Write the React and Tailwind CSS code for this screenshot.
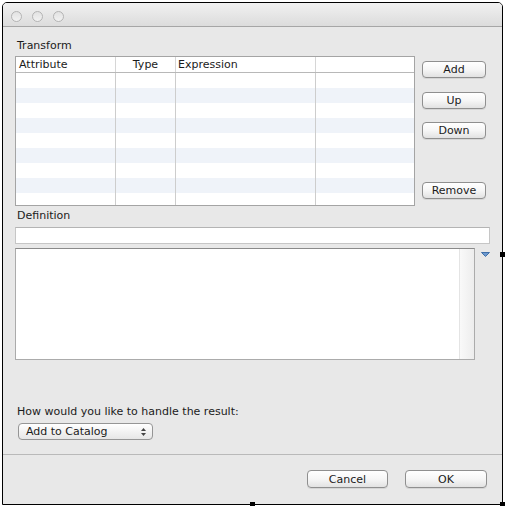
import React from "react";

const rows = [0, 1, 2, 3, 4, 5, 6, 7, 8];

function AquaButton({ children, className = "" }) {
  return (
    <button
      className={
        "flex items-center justify-center rounded-[4px] border border-[#8f8f8f] bg-linear-to-b from-white via-[#f6f6f6] to-[#e2e2e2] text-[11px] leading-none text-[#1b1b1b] shadow-[0_1px_0_rgba(0,0,0,0.08)] " +
        className
      }
    >
      {children}
    </button>
  );
}

function Light() {
  return (
    <div className="h-[11px] w-[11px] rounded-full border border-[#b4b4b4] bg-linear-to-b from-[#e2e2e2] to-[#f2f2f2]" />
  );
}

export default function App() {
  return (
    <div className="relative h-[513px] w-[511px] bg-white font-['DejaVu_Sans',sans-serif] text-[#1b1b1b]">
      <div className="ml-[2px] flex h-[503px] w-[501px] flex-col translate-y-[2px] rounded-t-[5px] border border-black bg-[#e8e8e8]">
        {/* title bar */}
        <div className="flex h-[24px] shrink-0 items-start gap-[10px] rounded-t-[4px] border-b border-[#a6a6a6] bg-linear-to-b from-[#f1f1f1] to-[#dcdcdc] pl-[8px] pt-[8px]">
          <Light />
          <Light />
          <Light />
        </div>

        {/* body */}
        <div className="flex flex-col px-[12px] pt-[12px]">
          <div className="pl-[2px] text-[11px] leading-[14px]">Transform</div>

          <div className="mt-[3px] flex">
            <div className="h-[150px] w-[400px] overflow-hidden border border-[#a4a4a4] bg-white">
              <div className="flex h-[16px] border-b border-[#b8b8b8] text-[11px] leading-[15px]">
                <div className="w-[100px] border-r border-[#d6d6d6] pl-[3px]">Attribute</div>
                <div className="w-[60px] border-r border-[#d6d6d6] text-center">Type</div>
                <div className="w-[140px] border-r border-[#d6d6d6] pl-[2px]">Expression</div>
                <div className="flex-1" />
              </div>
              {rows.map((r) => (
                <div
                  key={r}
                  className={"flex h-[15px] " + (r % 2 === 1 ? "bg-[#eff3f9]" : "bg-white")}
                >
                  <div className="w-[100px] border-r border-[#cdcdcd]" />
                  <div className="w-[60px] border-r border-[#cdcdcd]" />
                  <div className="w-[140px] border-r border-[#cdcdcd]" />
                  <div className="flex-1" />
                </div>
              ))}
            </div>

            <div className="ml-[7px] flex flex-col">
              <AquaButton className="mt-[5px] h-[17px] w-[64px]">Add</AquaButton>
              <AquaButton className="mt-[14px] h-[17px] w-[64px]">Up</AquaButton>
              <AquaButton className="mt-[13px] h-[17px] w-[64px]">Down</AquaButton>
              <AquaButton className="mt-[43px] h-[17px] w-[64px]">Remove</AquaButton>
            </div>
          </div>

          <div className="mt-[3px] pl-[2px] text-[11px] leading-[14px]">Definition</div>

          <div className="mt-[4px] h-[17px] w-[475px] border border-[#c6c6c6] border-t-[#b4b4b4] bg-white" />

          <div className="mt-[4px] flex items-start">
            <div className="flex h-[112px] w-[461px] border border-[#ababab] border-t-[#8a8a8a] bg-white">
              <div className="flex-1" />
              <div className="w-[15px] border-l border-[#e4e4e4] bg-linear-to-r from-[#f9f9f9] to-[#ededed]" />
            </div>
            <svg className="ml-[6px] mt-[4px]" width="9" height="5" viewBox="0 0 9 5">
              <path d="M0.5 0.5 L8.5 0.5 L4.5 4.5 Z" fill="#6d99cf" stroke="#3f6ea8" strokeWidth="1" />
            </svg>
          </div>

          <div className="mt-[45px] pl-[2px] text-[11px] leading-[14px]">
            How would you like to handle the result:
          </div>

          <div className="ml-[3px] mt-[4px] flex h-[17px] w-[135px] items-center justify-between rounded-[4px] border border-[#959595] bg-linear-to-b from-white to-[#e6e6e6] pl-[7px] pr-[6px] text-[11px] leading-none">
            <span>Add to Catalog</span>
            <svg width="5" height="8" viewBox="0 0 5 8">
              <path d="M0 3 L2.5 0 L5 3 Z" fill="#444" />
              <path d="M0 5 L2.5 8 L5 5 Z" fill="#444" />
            </svg>
          </div>
        </div>

        <div className="mt-[14px] h-px w-full bg-[#b9b9b9]" />

        <div className="mt-[15px] flex justify-end gap-[17px] pr-[15px]">
          <AquaButton className="h-[18px] w-[81px]">Cancel</AquaButton>
          <AquaButton className="h-[18px] w-[82px]">OK</AquaButton>
        </div>
      </div>

      {/* resize handles */}
      <div className="absolute left-[250px] top-[502px] h-[4px] w-[5px] bg-black" />
      <div className="absolute left-[500px] top-[502px] h-[4px] w-[5px] bg-black" />
      <div className="absolute left-[500px] top-[252px] h-[5px] w-[5px] bg-black" />
    </div>
  );
}
